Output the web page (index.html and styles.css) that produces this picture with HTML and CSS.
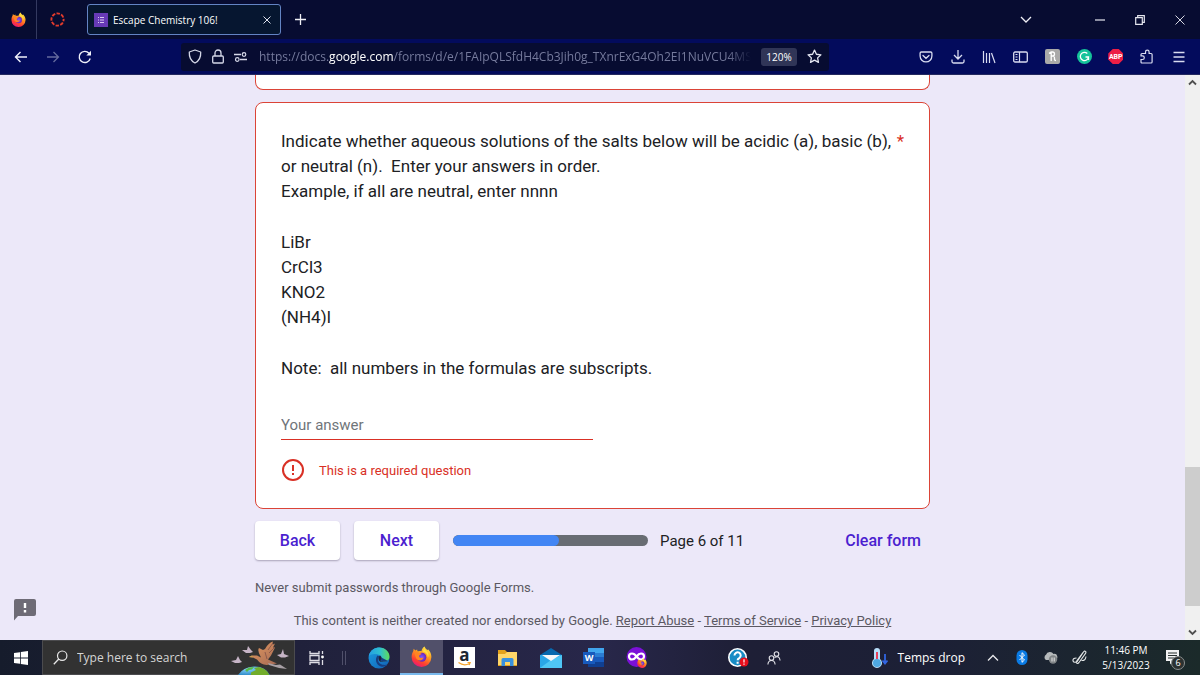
FILE: index.html
```html
<!DOCTYPE html>
<html lang="en">
<head>
<meta charset="utf-8">
<title>Escape Chemistry 106!</title>
<link rel="stylesheet" href="styles.css">
</head>
<body>
<svg class="defs" aria-hidden="true">
  <defs>
    <linearGradient id="fx" x1="0.8" y1="0" x2="0.3" y2="1"><stop offset="0" stop-color="#fff04a"/><stop offset="0.4" stop-color="#ff9a1f"/><stop offset="0.75" stop-color="#ff4030"/><stop offset="1" stop-color="#e8157f"/></linearGradient>
    <radialGradient id="fxg"><stop offset="0" stop-color="#7a5cff"/><stop offset="1" stop-color="#6b22b5"/></radialGradient>
    <linearGradient id="edgeTop" x1="0" y1="0" x2="1" y2="0"><stop offset="0" stop-color="#249ee4"/><stop offset="0.55" stop-color="#2fc0d0"/><stop offset="1" stop-color="#5fdc58"/></linearGradient>
    <linearGradient id="edgeLow" x1="0" y1="0" x2="1" y2="1"><stop offset="0" stop-color="#1b9de2"/><stop offset="1" stop-color="#1262b5"/></linearGradient>
    <radialGradient id="earth" cx="0.3" cy="0.3" r="0.9"><stop offset="0" stop-color="#86d3fa"/><stop offset="1" stop-color="#1979bd"/></radialGradient>
    <linearGradient id="bird" x1="0" y1="0" x2="1" y2="1"><stop offset="0" stop-color="#e59a60"/><stop offset="1" stop-color="#a56b55"/></linearGradient>
    <symbol id="firefox" viewBox="0 0 20 20">
      <path d="M13 .5c.3 1.400 1.300 2.300 2.700 3.600l.5-.9c2.200 2 3.300 4.700 3.200 7.500A9.400 9.400 0 0 1 .6 10.500C.6 8 1.400 6 2.200 4.700l.3-2 1.700 1.500 1.600-.8.4 1.500C8.600 5 9.500 4.600 10 5.100 10.200 3.200 11.300 1.400 13 .5z" fill="url(#fx)"/>
      <circle cx="10.300" cy="10.700" r="4.300" fill="url(#fxg)"/>
      <path d="M3 5c2 .2 3.400.5 4.200 1.500l2.900.6c-.2 1.300-2.300 1.200-2.400 2.500-.1 1.700 2.600 2.600 4.200 1.100-.1 2.800-4.500 4.500-6.900 1.200C4 10 3.600 7.200 3 5z" fill="#ff8423"/>
      <path d="M11.200 5.500c2.800 0 5 2.300 4.700 5.600 1-1 1.200-3 .2-4.700-1-1.700-2.600-2.600-3.400-4.200-.8 1-.9 2.200-1.500 3.300z" fill="#ffdf3e"/>
    </symbol>
  </defs>
</svg>

<header class="browser">
  <div class="tabs">
    <button class="view" aria-label="Firefox View"><svg width="15" height="15"><use href="#firefox"/></svg></button>
    <button class="pinned" aria-label="Canvas"><svg width="15" height="15" viewBox="0 0 16 16"><circle cx="8" cy="8" r="6.500" fill="none" stroke="#e23b2c" stroke-width="2" stroke-dasharray="3.700 1.405" stroke-dashoffset="1.850"/></svg></button>
    <div class="tab">
      <svg width="14" height="14" viewBox="0 0 14 14"><path d="M0 0h14v14H0z" fill="#673ab7"/><path d="M4 4.500h1M6 4.500h4M4 7h1M6 7h4M4 9.500h1M6 9.500h4" stroke="#d8c9f2"/></svg>
      <span class="tab-title">Escape Chemistry 106!</span>
      <button aria-label="Close tab"><svg width="8" height="8" viewBox="0 0 8 8"><path d="M.5.5l7 7M7.500.5l-7 7" stroke="#dfe2ee"/></svg></button>
    </div>
    <button class="new-tab" aria-label="New tab"><svg width="11" height="11" viewBox="0 0 11 11"><path d="M5.500 0v11M0 5.500h11" stroke="#f0f0f6" stroke-width="1.300"/></svg></button>
    <div class="window-controls">
      <button class="all-tabs" aria-label="List all tabs"><svg width="12" height="7" viewBox="0 0 12 7"><path d="M1 1l5 5 5-5" fill="none" stroke="#f0f0f6" stroke-width="1.300"/></svg></button>
      <button aria-label="Minimize"><svg width="10" height="10" viewBox="0 0 10 10"><path d="M0 5h10" stroke="#d5d7e2" stroke-width="1.300"/></svg></button>
      <button aria-label="Restore"><svg width="10" height="10" viewBox="0 0 10 10"><path d="M.7 2.700h6.600v6.600H.7zM2.700 2.500V.7h6.600v6.600H7.500" fill="none" stroke="#e4e5ee" stroke-width="1.200"/></svg></button>
      <button aria-label="Close"><svg width="10" height="10" viewBox="0 0 10 10"><path d="M.5.5l9 9M9.500.5l-9 9" stroke="#d5d7e2"/></svg></button>
    </div>
  </div>
  <div class="toolbar">
    <div class="history">
      <button aria-label="Back"><svg width="14" height="14" viewBox="0 0 14 14"><path d="M13 7H1.500M6.500 2L1.500 7l5 5" fill="none" stroke="#f0f1fa" stroke-width="1.400"/></svg></button>
      <button aria-label="Forward" disabled><svg width="14" height="14" viewBox="0 0 14 14"><path d="M1 7h11.500M7.500 2l5 5-5 5" fill="none" stroke="#656b9d" stroke-width="1.300"/></svg></button>
      <button aria-label="Reload"><svg width="14" height="14" viewBox="0 0 14 14"><path d="M12.200 8.500A5.600 5.600 0 1 1 11 3.200" fill="none" stroke="#f0f1fa" stroke-width="1.400"/><path d="M13 .8v4.700H8.300z" fill="#f0f1fa"/></svg></button>
    </div>
    <div class="address">
      <svg width="14" height="15" viewBox="0 0 14 15"><path d="M7 1l5.700 2C13 8 11 12 7 14 3 12 1 8 1.300 3z" fill="none" stroke="#d5d8e8" stroke-width="1.300" stroke-linejoin="round"/></svg>
      <svg width="12" height="15" viewBox="0 0 12 15"><path d="M1.700 7h8.600q1 0 1 1v5q0 1-1 1H1.700q-1 0-1-1V8q0-1 1-1zM3 7V4a3 3 0 0 1 6 0v3" fill="none" stroke="#d5d8e8" stroke-width="1.300"/></svg>
      <svg width="14" height="10" viewBox="0 0 14 10"><path d="M0 2.500h7M6 7.500h7" stroke="#d5d8e8" stroke-width="1.300"/><circle cx="10" cy="2.500" r="1.800" fill="none" stroke="#d5d8e8" stroke-width="1.200"/><circle cx="3.300" cy="7.500" r="1.800" fill="none" stroke="#d5d8e8" stroke-width="1.200"/></svg>
      <div class="url">https://docs.<b>google.com</b>/forms/d/e/1FAIpQLSfdH4Cb3Jih0g_TXnrExG4Oh2EI1NuVCU4MS9N</div>
      <button class="zoom">120%</button>
      <button aria-label="Bookmark"><svg width="15" height="15" viewBox="0 0 14 14"><path d="M7 1l1.800 3.900 4.200.5-3.100 2.900.8 4.200L7 10.400l-3.700 2.100.8-4.200L1 5.400l4.200-.5z" fill="none" stroke="#e5e7f2" stroke-width="1.200" stroke-linejoin="round"/></svg></button>
    </div>
    <div class="extensions">
      <button aria-label="Pocket"><svg width="14" height="14" viewBox="0 0 14 14"><path d="M2.300 2h9.400q1.200 0 1.200 1.200V6a5.900 5.900 0 0 1-11.800 0V3.200Q1.100 2 2.300 2zM4 5.500l3 2.800 3-2.800" fill="none" stroke="#d9dcf0" stroke-width="1.300" stroke-linecap="round"/></svg></button>
      <button aria-label="Downloads"><svg width="14" height="14" viewBox="0 0 14 14"><path d="M7 0v9M3 5l4 4 4-4M1 9.500v2q0 1.500 1.500 1.500h9q1.500 0 1.500-1.500v-2" fill="none" stroke="#d9dcf0" stroke-width="1.300"/></svg></button>
      <button aria-label="Library"><svg width="14" height="14" viewBox="0 0 14 14"><path d="M1.500 1v12M4.500 3v10M7.500 3v10M9.500 3l3.500 10" fill="none" stroke="#d9dcf0" stroke-width="1.200"/></svg></button>
      <button aria-label="Sidebars"><svg width="15" height="14" viewBox="0 0 15 14"><rect x=".7" y="2" width="13.600" height="10" rx="1.300" fill="none" stroke="#d9dcf0" stroke-width="1.300"/><path d="M6.500 2v10M2.500 4.500h2M2.500 7h2M2.500 9.500h2" stroke="#d9dcf0" stroke-width="1.200"/></svg></button>
      <button aria-label="Honey"><svg width="15" height="15" viewBox="0 0 15 15"><rect width="15" height="15" rx="2" fill="#aaa9a8"/><path d="M6.200 3v9M4 4.500q1.500-1.500 2.500-1.500h1q2 0 2 2T7.500 7H6.200M7 7q2.500-.5 2.500 2v1.500q0 1 1.500 1" fill="none" stroke="#fff" stroke-width="1.300"/></svg></button>
      <button aria-label="Grammarly"><svg width="15" height="15" viewBox="0 0 15 15"><circle cx="7.500" cy="7.500" r="7.500" fill="#15c39a"/><path d="M10.300 4.500A4.100 4.100 0 1 0 11.500 8H8.500M11.500 8v3" fill="none" stroke="#fff" stroke-width="1.300"/></svg></button>
      <button aria-label="Adblock Plus"><span class="abp">ABP</span></button>
      <button aria-label="Extensions"><svg width="14" height="15" viewBox="0 0 14 15"><path d="M2 4.500h3.500V3a1.800 1.800 0 0 1 3.600 0v1.500h2q1 0 1 1v7.500q0 1-1 1H2q-1 0-1-1v-2.500h1.500a1.800 1.800 0 0 0 0-3.600H1V5.500q0-1 1-1z" fill="none" stroke="#d9dcf0" stroke-width="1.200"/></svg></button>
      <button aria-label="Menu"><svg width="12" height="12" viewBox="0 0 12 12"><path d="M.5 1.500h11M.5 6h11M.5 10.500h11" stroke="#d9dcf0" stroke-width="1.400"/></svg></button>
    </div>
  </div>
</header>

<div class="viewport">
  <main class="page">
    <form class="form">
      <div class="card card-previous"></div>
      <section class="card">
        <label class="question" for="answer">
          <span class="question-text">
            <span>Indicate whether aqueous solutions of the salts below will be acidic (a), basic (b), or neutral (n).&nbsp; Enter your answers in order.<br>Example, if all are neutral, enter nnnn</span>
            <span>LiBr<br>CrCl3<br>KNO2<br>(NH4)I</span>
            <span>Note:&nbsp; all numbers in the formulas are subscripts.</span>
          </span>
          <span class="required">*</span>
        </label>
        <input class="answer" id="answer" type="text" placeholder="Your answer">
        <div class="error">
          <svg width="24" height="24" viewBox="0 0 24 24"><circle cx="12" cy="12" r="10" fill="none" stroke="#d93025" stroke-width="2"/><path d="M12 7v6M12 15v2" stroke="#d93025" stroke-width="2"/></svg>
          <span>This is a required question</span>
        </div>
      </section>
      <div class="actions">
        <button class="step" type="button">Back</button>
        <button class="step" type="button">Next</button>
        <div class="progress"><div class="progress-fill" style="width:54.500%"></div></div>
        <span class="page-count">Page 6 of 11</span>
        <button class="clear" type="button">Clear form</button>
      </div>
      <p class="note">Never submit passwords through Google Forms.</p>
      <p class="legal">This content is neither created nor endorsed by Google. <a href="#">Report Abuse</a> - <a href="#">Terms of Service</a> - <a href="#">Privacy Policy</a></p>
    </form>
    <button class="feedback" aria-label="Report a problem"><svg width="22" height="22" viewBox="0 0 22 22"><path d="M2 0h18q2 0 2 2v13q0 2-2 2H4l-4 4.500V2Q0 0 2 0z" fill="#6e6b76"/><path d="M11 4v5M11 11v2.500" stroke="#fff" stroke-width="2.400"/></svg></button>
  </main>
  <div class="scrollbar">
    <svg width="15" height="15" viewBox="0 0 15 15"><path d="M4 9.500L7.500 6 11 9.500" fill="none" stroke="#505050" stroke-width="1.800"/></svg>
    <div class="track"><div class="thumb"></div></div>
    <svg width="15" height="15" viewBox="0 0 15 15"><path d="M4 5.500L7.500 9 11 5.500" fill="none" stroke="#505050" stroke-width="1.800"/></svg>
  </div>
</div>

<footer class="taskbar">
  <button class="start" aria-label="Start"><svg width="14" height="14" viewBox="0 0 14 14"><path d="M0 2l6-.8v5.400H0zM6.800 1.100L14 0v6.600H6.800zM0 7.400h6v5.400L0 12zM6.800 7.400H14V14l-7.200-1.100z" fill="#fff"/></svg></button>
  <div class="search">
    <svg width="15" height="15" viewBox="0 0 15 15"><circle cx="9.200" cy="5.700" r="4.700" fill="none" stroke="#e8e8e8" stroke-width="1.200"/><path d="M5.800 9L.8 14.200" stroke="#e8e8e8" stroke-width="1.300"/></svg>
    <input type="text" aria-label="Search" placeholder="Type here to search">
    <svg class="scene" width="60" height="34" viewBox="0 0 60 34">
      <path d="M7 34q5-8 16-8.500T39 34z" fill="url(#earth)"/>
      <path d="M20 34q-1-3 2-3.500l3-1.500-2-2 5-1q8 2 10.500 8z" fill="#72ad2b"/><path d="M14 29l4-2.500 5-.5-2 2.500-3 .5-2 2z" fill="#58b847"/>
      <g fill="#c6b4c6"><path d="M0 20l5-1 2-4 2 4 2 2-3 1H4zM11 9l5 0 1-4 3 4 2 2-3 1h-4zM46 14l4-1 2-5 1 5 5 2-4 1.500h-4z"/></g>
      <path d="M18 16l3-1.500h5l4 2q-4-7-2-9.500l4 2 2-1q4-7 8-7.500-1 3 0 3l2-1-2 4 2 0-4 8-3 4 9 4-7 1q-8 2-13-5l-4-2z" fill="url(#bird)"/>
      <path d="M18 16l3-1.500 1 2z" fill="#c8a04f"/><path d="M37 22l8 2 4-.5 7 4.500-8-1-10-3z" fill="#a8a0a5"/>
      <path d="M37 9l5-7M38 12l6-6M34 11l2 7" fill="none" stroke="#825148" stroke-width=".8"/>
    </svg>
  </div>
  <button class="task-view" aria-label="Task view"><svg width="15" height="14" viewBox="0 0 15 14"><path d="M1 0v2.500h9V0M1 14v-2.500h9V14M1 4.500h9v5H1zM13.500 0v3M13.500 9v5" fill="none" stroke="#dedee5" stroke-width="1.300"/><circle cx="13.500" cy="6" r="1.400" fill="#fff"/></svg></button>
  <span class="grip"></span>
  <nav class="apps" aria-label="Applications">
    <button aria-label="Edge"><svg width="22" height="22" viewBox="0 0 22 22"><circle cx="11" cy="11" r="10.500" fill="url(#edgeLow)"/><path d="M.6 9.500C2 2.500 8 .3 11.500.5 17.500.7 21.500 5 21.500 9.500c0 3.500-2.500 5-5.500 5-2.500 0-3.300-1-2.700-2 .8-1.500.7-3.500-1.800-4.500C7 6.400 3 7 .6 9.500z" fill="url(#edgeTop)"/><path d="M9.500 8.500c-3 3.500-1.500 9.500 3.500 11 2.500.7 5-.5 6.500-2-3 1-9 .5-9.500-4.500-.1-1.500.5-2.500 1.500-3.500.8 1 1 2 .5 3 1 2 4.500 3 8 1.500" fill="#173e82"/><path d="M12 8.500c1.700 1.200 1.700 2.700.8 4.200-.6 1.200.3 2 3.200 2-3 .8-5.200-.3-5.500-2.700-.1-1.500.5-2.800 1.500-3.500z" fill="#20203b"/></svg></button>
    <button class="active" aria-label="Firefox"><svg width="21" height="21"><use href="#firefox"/></svg></button>
    <button aria-label="Amazon"><span class="amazon"><span>a</span><svg width="13" height="4" viewBox="0 0 13 4"><path d="M.5.5q5.500 4 11 1M9.500.5h2.700l-1 2.500" fill="none" stroke="#f5a32e" stroke-width="1.200"/></svg></span></button>
    <button aria-label="File Explorer"><svg width="20" height="18" viewBox="0 0 20 18"><path d="M0 1h7l2 2h10v14H0z" fill="#e3a21c"/><path d="M0 5h7l2-2h10v13H0z" fill="#ffd668"/><path d="M3.500 17v-6.500q0-1.500 1.500-1.500h9q1.500 0 1.500 1.500V17h-3.500v-4h-5v4z" fill="#3991de"/></svg></button>
    <button aria-label="Mail"><svg width="22" height="20" viewBox="0 0 22 20"><path d="M0 7l11-7 11 7z" fill="#0768ae"/><path d="M0 7h22v13H0z" fill="#2aa6e8"/><path d="M0 20l11-8 11-5v13z" fill="#4fc6f5"/><path d="M2 7h18l-9 6z" fill="#f6f7f9"/></svg></button>
    <button aria-label="Word"><span class="word"><b>W</b></span></button>
    <button aria-label="Firefox private browsing"><svg width="22" height="22" viewBox="0 0 22 22"><circle cx="10.500" cy="10" r="10" fill="#7c10d8"/><path d="M10.500 9.500c-2-3-3.500-3-4.500-3a3 3 0 0 0 0 6c2 0 3-1 4.500-3s2.500-3 4.500-3a3 3 0 0 1 0 6c-2 0-3-1-4.500-3z" fill="none" stroke="#fff" stroke-width="2.200"/><use href="#firefox" x="11" y="11" width="10" height="10"/></svg></button>
  </nav>
  <div class="support">
    <button aria-label="Get help"><svg width="21" height="20" viewBox="0 0 21 20"><circle cx="9.500" cy="9.500" r="8.700" fill="#188cc5" stroke="#fff" stroke-width="1.600"/><path d="M6.500 7.500a3.100 3.100 0 1 1 4.700 2.600Q9.600 11 9.600 12.300M9.600 13.700v2" fill="none" stroke="#fff" stroke-width="2"/><circle cx="16" cy="14" r="4.500" fill="#e70e1b"/><path d="M16 11.300v3.200M16 15.500v1.200" stroke="#fff" stroke-width="1.200"/></svg></button>
    <button aria-label="People"><svg width="14" height="14" viewBox="0 0 14 14"><circle cx="4.500" cy="7" r="2.300" fill="none" stroke="#e2e2e8" stroke-width="1.100"/><circle cx="9.500" cy="3" r="2.300" fill="none" stroke="#e2e2e8" stroke-width="1.100"/><path d="M.9 13.500q.3-4 3.600-4t3.600 4M7.500 6.500q5-2.500 5.600 3" fill="none" stroke="#e2e2e8" stroke-width="1.100"/></svg></button>
  </div>
  <button class="weather">
    <svg width="16" height="20" viewBox="0 0 16 20"><path d="M2 3a3 3 0 0 1 6 0v8a5 5 0 1 1-6 0z" fill="#b8dffa"/><circle cx="5" cy="15" r="4" fill="#4ea8e2"/><path d="M5 4v7" stroke="#e5415b" stroke-width="2"/><path d="M13 6v9M10.500 12.500l2.500 3 2.500-3" fill="none" stroke="#3165e2" stroke-width="1.800"/></svg>
    <span>Temps drop</span>
  </button>
  <div class="tray">
    <button aria-label="Show hidden icons"><svg width="12" height="8" viewBox="0 0 12 8"><path d="M1 6.500l5-5 5 5" fill="none" stroke="#e8e8ec" stroke-width="1.300"/></svg></button>
    <button aria-label="Bluetooth"><svg width="12" height="15" viewBox="0 0 12 15"><rect x=".5" width="11" height="15" rx="5.500" fill="#0a7be4"/><path d="M3.500 5l5 5L6 12.300V2.700L8.500 5l-5 5" fill="none" stroke="#fff"/></svg></button>
    <button aria-label="OneDrive"><svg width="15" height="13" viewBox="0 0 15 13"><path d="M3 9a3 3 0 0 1 0-5.200A4.200 4.200 0 0 1 10.500 3 3 3 0 0 1 12 9z" fill="#b6babb"/><circle cx="10" cy="8.500" r="4.200" fill="#808587"/><path d="M9 6.500v4M11.200 6.500v4" stroke="#e5e5e5"/></svg></button>
    <button aria-label="Pen"><svg width="15" height="15" viewBox="0 0 15 15"><path d="M4.500 8q-4 0-3.500 3 .8 2 4 .8L11.500 2q1-1.500 2-.6t-.3 2.500L7 12.500q-1.500 1.500-2.300.7T5 10.500L11 2.500M9.500 10.500q4 .5 4.500-4" fill="none" stroke="#e2e5e5" stroke-width="1.100"/></svg></button>
  </div>
  <div class="clock"><span>11:46 PM</span><span>5/13/2023</span></div>
  <button class="notifications" aria-label="6 notifications"><svg width="15" height="15" viewBox="0 0 15 15"><path d="M1 0h13v11H8l-3 3.500V11H1z" fill="#f2f3f3"/><path d="M3 3h9M3 5.500h9M3 8h6" stroke="#27302f"/></svg><span class="count">6</span></button>
</footer>
</body>
</html>
```
FILE: styles.css
```css
* { box-sizing: border-box; }

body {
  margin: 0;
  height: 100vh;
  display: flex;
  flex-direction: column;
  overflow: hidden;
  background: #ece8f9;
  font-family: Roboto, "Liberation Sans", sans-serif;
}

button {
  padding: 0;
  border: 0;
  background: none;
  font: inherit;
  color: inherit;
  display: flex;
  align-items: center;
  justify-content: center;
  flex: none;
}

svg { display: block; flex: none; }
p { margin: 0; }
.defs { position: absolute; width: 0; height: 0; }

/* Browser chrome */
.browser, .taskbar { flex: none; font-family: "Open Sans", "Noto Sans", sans-serif; color: #fff; }
.tabs { display: flex; align-items: center; height: 39px; background: #070c31; }
.view { width: 37px; height: 39px; border-right: 1px solid #343a60; }
.pinned { width: 40px; height: 39px; }
.tab {
  display: flex;
  align-items: center;
  width: 194px;
  height: 31px;
  margin-left: 10px;
  padding: 0 9px 0 6px;
  gap: 5px;
  border: 1px solid #6384c4;
  border-radius: 3px;
  background: #061630;
}
.tab-title { flex: 1; font-size: 10px; white-space: nowrap; }
.new-tab { width: 38px; height: 39px; }
.window-controls { display: flex; margin-left: auto; }
.window-controls button { width: 40px; height: 39px; }
.window-controls .all-tabs { margin-right: 34px; }

.toolbar {
  display: flex;
  align-items: center;
  height: 36px;
  padding: 0 13px 0 14px;
  background: #030b5c;
  border-bottom: 1px solid #24295f;
}
.history { display: flex; gap: 18px; }
.address {
  display: flex;
  flex: 1;
  min-width: 0;
  align-items: center;
  height: 28px;
  margin: 0 89px;
  padding: 0 7px;
  gap: 10px;
  border-radius: 3px;
  background: #070c31;
}
.url {
  flex: 1;
  min-width: 0;
  padding-left: 1px;
  overflow: hidden;
  white-space: nowrap;
  font-size: 12px;
  line-height: 20px;
  color: #757a9c;
  mask-image: linear-gradient(to right, #000 calc(100% - 24px), transparent);
}
.url b { font-weight: 400; color: #fff; }
.zoom { width: 36px; height: 18px; border-radius: 3px; background: #303557; font-size: 10px; }
.extensions { display: flex; justify-content: space-between; flex: none; width: 269px; }
.extensions button { width: 16px; height: 20px; }
.abp {
  display: flex;
  align-items: center;
  justify-content: center;
  width: 15px;
  height: 15px;
  background: #ed1e45;
  clip-path: polygon(30% 0, 70% 0, 100% 30%, 100% 70%, 70% 100%, 30% 100%, 0 70%, 0 30%);
  font: 700 7px Roboto, sans-serif;
}

/* Form page */
.viewport { display: flex; flex: 1; min-height: 0; }
.page { position: relative; flex: 1; overflow: hidden; }
.form { width: 100%; max-width: 675px; margin: 0 auto; }
.card {
  margin-bottom: 12px;
  padding: 26px 25px;
  border: 1px solid #db4437;
  border-radius: 8px;
  background: #fff;
}
.card-previous { height: 15px; padding: 0; border-top: 0; border-radius: 0 0 8px 8px; }
.question { display: flex; gap: 4px; font-size: 17px; line-height: 25px; color: #202124; }
.question-text { display: flex; flex: 1; flex-direction: column; gap: 26px; }
.required { color: #d93025; }
.answer {
  display: block;
  width: 50%;
  height: 29px;
  margin-top: 30px;
  padding: 0;
  border: 0;
  border-bottom: 1px solid #d93025;
  border-radius: 0;
  outline: 0;
  background: none;
  font: 15px Roboto, sans-serif;
}
.answer::placeholder { color: #70757a; opacity: 1; }
.error { display: flex; align-items: center; gap: 14px; margin-top: 18px; font-size: 13px; color: #d93025; }

.actions { display: flex; align-items: center; font-size: 15px; }
.step {
  width: 85px;
  height: 39px;
  margin-right: 14px;
  border-radius: 4px;
  background: #fff;
  box-shadow: 0 1px 2px #a8a2b8;
  font-size: 16px;
  font-weight: 500;
  color: #4b1fd0;
}
.progress { width: 195px; height: 11px; border-radius: 6px; background: #686c73; overflow: hidden; }
.progress-fill { height: 100%; border-radius: 6px; background: #4285f4; }
.page-count { margin-left: 12px; color: #202124; }
.clear { margin-left: auto; padding: 0 9px; font-size: 16px; font-weight: 500; color: #4b1fd0; }
.note, .legal { font-size: 13px; line-height: 20px; color: #5b5862; }
.note { margin-top: 18px; }
.legal { margin-top: 13px; text-align: center; }
.legal a { color: inherit; }
.feedback { position: absolute; left: 14px; bottom: 19px; }

.scrollbar { display: flex; flex-direction: column; width: 15px; background: #f0f0f0; }
.track { flex: 1; display: grid; grid-template-rows: 377fr 139fr 19fr; }
.thumb { grid-row: 2; background: #cdcdcd; }

/* Taskbar */
.taskbar {
  display: flex;
  align-items: center;
  height: 35px;
  background: linear-gradient(to right, #161c2c 0, #20213b 25%, #28274a 50%, #1e1f36 62%, #1c2036 78%, #1b2a2a 100%);
}
.start { width: 42px; height: 35px; }
.search {
  display: flex;
  align-items: center;
  width: 253px;
  height: 35px;
  padding: 0 3px 0 10px;
  gap: 9px;
  border: 1px solid #4b4b4e;
  background: #323232;
}
.search input { flex: 1; min-width: 0; padding: 0; border: 0; background: none; font: 12px "Open Sans", sans-serif; color: #fff; }
.search input::placeholder { color: #d5d5d5; opacity: 1; }
.task-view { width: 42px; height: 35px; }
.grip { width: 4px; height: 14px; margin: 0 11px 0 5px; border: solid #50506a; border-width: 0 1px; }
.apps { display: flex; }
.apps button { width: 43px; height: 35px; }
.apps .active { background: #51506a; border-bottom: 2px solid #79b9ed; }
.amazon { display: flex; flex-direction: column; align-items: center; width: 21px; height: 21px; background: #fff; color: #1d2631; font: 700 17px "Open Sans", sans-serif; line-height: 15px; }
.word { display: flex; align-items: center; width: 21px; height: 19px; background: linear-gradient(#41a5ee 25%, #2b7cd3 25% 50%, #185abd 50% 75%, #103f91 75%) right / 16px 19px no-repeat; }
.word b { width: 12px; background: #185abd; font-size: 9px; line-height: 12px; text-align: center; }
.support { display: flex; gap: 18px; margin-left: 70px; }
.weather { gap: 10px; margin-left: auto; font: 12px "Open Sans", sans-serif; }
.tray { display: flex; gap: 14px; margin-left: 20px; }
.tray button { width: 15px; height: 35px; }
.clock { display: flex; flex-direction: column; align-items: center; width: 50px; margin-left: 14px; font: 10px "Open Sans", sans-serif; line-height: 15px; }
.notifications { position: relative; width: 28px; height: 35px; margin: 0 14px 0 7px; }
.count {
  position: absolute;
  left: 13px;
  top: 16px;
  width: 14px;
  height: 14px;
  border: 1px solid #8b9090;
  border-radius: 50%;
  background: #2b3131;
  font-size: 9px;
  line-height: 12px;
  text-align: center;
}
```
